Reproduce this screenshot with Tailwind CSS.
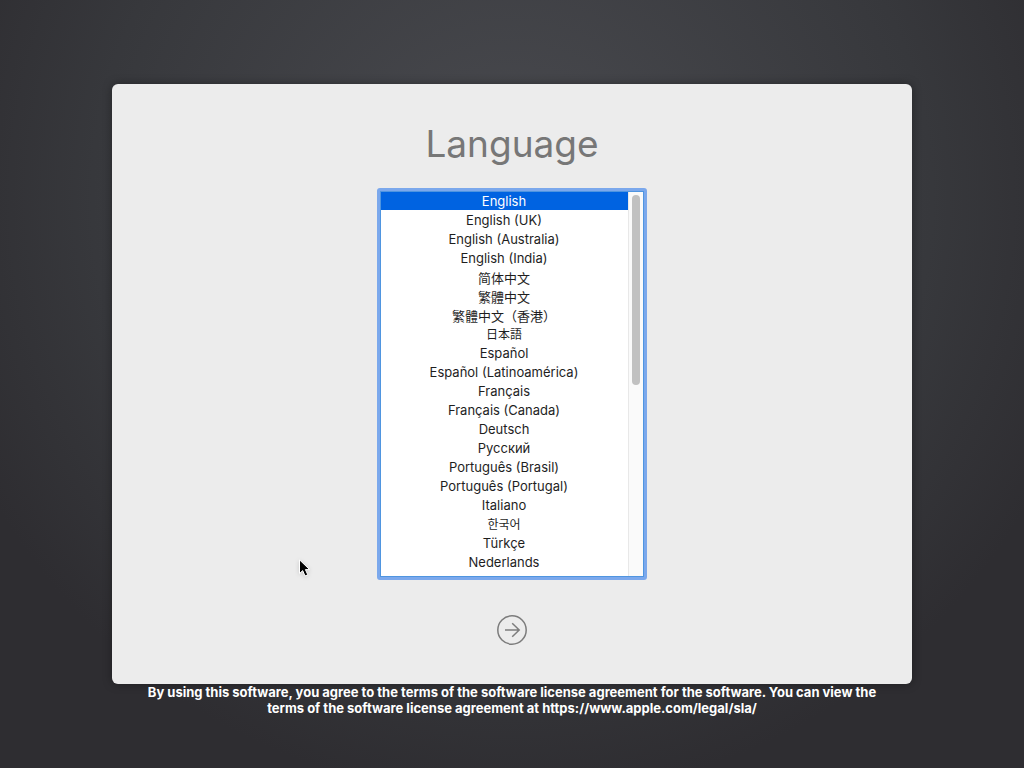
<!DOCTYPE html>
<html lang="en">
<head>
    <meta charset="UTF-8">
    <meta name="viewport" content="width=device-width, initial-scale=1.0">
    <title>Language</title>
    <script src="https://cdn.jsdelivr.net/npm/@tailwindcss/browser@4"></script>
</head>
<body class="relative min-h-screen flex flex-col items-center pt-[84px] pb-12 font-['Inter','Noto_Sans_CJK_SC',sans-serif] bg-[#2e2d31] bg-[radial-gradient(circle_600px_at_50%_26%,#4a4b50_0%,#37383c_70%,#2e2d31_100%)]">

<main class="w-full max-w-[800px] rounded-md bg-[#ececec] shadow-[0_0_10px_rgba(0,0,0,0.35)]">
    <form class="flex flex-col items-center pt-9 pb-[39px]">
        <h1 class="text-[37px] leading-[48px] text-[#777777]"><label for="language">Language</label></h1>

        <!-- Language list -->
        <div class="mt-5 flex rounded-[3px] border-3 border-[#7ba8ec] bg-[#4f95e0] p-px">
            <select id="language" name="language" size="20" class="block h-96 w-[247px] bg-white text-[13px] text-[#1e1e1e] text-center overflow-hidden outline-none [scrollbar-width:none] *:h-[18px] *:mb-px *:p-0 *:pt-px *:pr-px *:text-center *:checked:bg-linear-to-r *:checked:from-[#0063e1] *:checked:to-[#0063e1] *:checked:[-webkit-text-fill-color:#ffffff]">
                <option value="en" selected>English</option>
                <option value="en-GB">English (UK)</option>
                <option value="en-AU">English (Australia)</option>
                <option value="en-IN">English (India)</option>
                <option value="zh-Hans" lang="zh-Hans" class="pt-0!">简体中文</option>
                <option value="zh-Hant" lang="zh-Hant" class="font-['Noto_Sans_CJK_TC',sans-serif] pt-0!">繁體中文</option>
                <option value="zh-HK" lang="zh-HK" class="font-['Noto_Sans_CJK_TC',sans-serif] pt-0!">繁體中文（香港）</option>
                <option value="ja" lang="ja" class="font-['Noto_Sans_CJK_JP',sans-serif] text-xs pt-0!">日本語</option>
                <option value="es" lang="es">Español</option>
                <option value="es-419" lang="es">Español (Latinoamérica)</option>
                <option value="fr" lang="fr">Français</option>
                <option value="fr-CA" lang="fr">Français (Canada)</option>
                <option value="de" lang="de">Deutsch</option>
                <option value="ru" lang="ru">Русский</option>
                <option value="pt-BR" lang="pt">Português (Brasil)</option>
                <option value="pt-PT" lang="pt">Português (Portugal)</option>
                <option value="it" lang="it">Italiano</option>
                <option value="ko" lang="ko" class="font-['Noto_Sans_CJK_KR',sans-serif] text-xs pt-0!">한국어</option>
                <option value="tr" lang="tr">Türkçe</option>
                <option value="nl" lang="nl">Nederlands</option>
            </select>
            <div class="w-[15px] border-l border-[#e8e8e8] bg-[#fafafa] pl-[3px] pt-[3px]" aria-hidden="true">
                <div class="h-[190px] w-2 rounded-full bg-[#c1c1c1]"></div>
            </div>
        </div>

        <button type="submit" aria-label="Continue" class="mt-[35px] rounded-full text-[#7c7c7c]">
            <svg class="block size-[30px]" viewBox="0 0 30 30" fill="none" stroke="currentColor" stroke-width="1.5">
                <circle cx="15" cy="15" r="14.2"/>
                <path d="M8 15H22.2M15.2 8.2L22.2 15L15.2 21.8"/>
            </svg>
        </button>
    </form>
</main>

<p class="w-full max-w-[760px] text-center text-[13px] leading-4 font-bold text-white">By using this software, you agree to the terms of the software license agreement for the software. You can view the terms of the software license agreement at https://www.apple.com/legal/sla/</p>

<!-- Pointer -->
<svg class="absolute left-[297px] top-[558px] h-5 w-4 drop-shadow-sm" viewBox="0 0 16 20" aria-hidden="true">
    <path d="M2.5 1.8V15.6L5.7 12.6L8 18L10.8 16.8L8.4 11.6H12.6Z" fill="#000000" stroke="#ffffff" stroke-width="1"/>
</svg>
</body>
</html>
